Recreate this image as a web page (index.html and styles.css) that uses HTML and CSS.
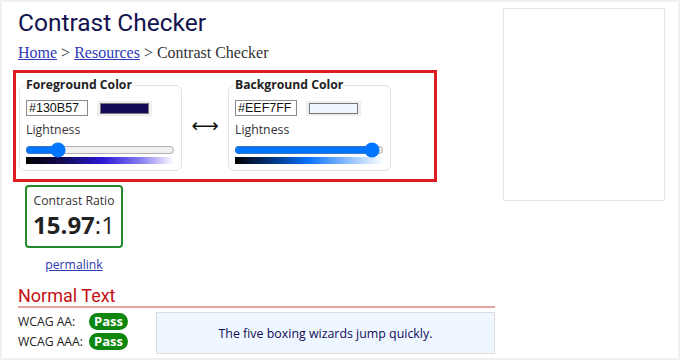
FILE: index.html
```html
<!DOCTYPE html>
<html>
<head>
<meta charset="utf-8">
<link rel="stylesheet" href="styles.css">
</head>
<body>
<div class="page">
  <main class="main">
    <h1 class="title">Contrast Checker</h1>
    <div class="crumbs"><a href="#">Home</a> &gt; <a href="#">Resources</a> &gt; Contrast Checker</div>
    <div class="highlight">
      <fieldset class="picker">
        <legend>Foreground Color</legend>
        <div class="pick-row">
          <input class="hex" type="text" value="#130B57">
          <span class="swatch"><span class="swatch-fill fg-fill"></span></span>
        </div>
        <div class="light-label">Lightness</div>
        <input class="range" type="range" min="0" max="100" value="19">
        <div class="grad fg-grad"></div>
      </fieldset>
      <div class="swap">&#x27F7;</div>
      <fieldset class="picker">
        <legend>Background Color</legend>
        <div class="pick-row">
          <input class="hex" type="text" value="#EEF7FF">
          <span class="swatch"><span class="swatch-fill bg-fill"></span></span>
        </div>
        <div class="light-label">Lightness</div>
        <input class="range" type="range" min="0" max="100" value="97">
        <div class="grad bg-grad"></div>
      </fieldset>
    </div>
    <div class="ratio-wrap">
      <div class="ratio">
        <div class="ratio-label">Contrast Ratio</div>
        <div class="ratio-value"><b>15.97</b>:1</div>
      </div>
      <a class="permalink" href="#">permalink</a>
    </div>
    <h2 class="section">Normal Text</h2>
    <div class="results">
      <div class="wcag">
        <div class="wcag-row"><span class="wcag-label">WCAG AA:</span><span class="pass">Pass</span></div>
        <div class="wcag-row"><span class="wcag-label">WCAG AAA:</span><span class="pass">Pass</span></div>
      </div>
      <div class="sample">The five boxing wizards jump quickly.</div>
    </div>
  </main>
  <aside class="ad"></aside>
</div>
</body>
</html>
```
FILE: styles.css
```css
html, body {
  margin: 0;
  padding: 0;
  background: #fff;
}
.page {
  width: 680px;
  height: 360px;
  box-sizing: border-box;
  border: 2px solid #f0f0f0;
  display: flex;
  gap: 8px;
  padding: 0 0 0 16px;
  overflow: hidden;
  font-family: "Open Sans", sans-serif;
  font-size: 12px;
  color: #222;
}
.main {
  width: 477px;
  flex: none;
}
.title {
  margin: 0;
  padding-top: 6px;
  font-family: Roboto, sans-serif;
  font-weight: 400;
  font-size: 24.5px;
  line-height: 30px;
  color: #12124e;
}
.crumbs {
  margin-top: 6px;
  font-family: "Liberation Serif", serif;
  font-size: 16px;
  line-height: 18px;
  color: #333;
}
.crumbs a {
  color: #2d3ab3;
}
.highlight {
  margin: 8px 0 0 -5px;
  width: 424px;
  height: 112px;
  box-sizing: border-box;
  border: 3px solid #dc1d22;
  display: flex;
  align-items: flex-start;
  padding: 4px 0 0 3px;
}
.picker {
  margin: 0;
  width: 163px;
  height: 94px;
  box-sizing: border-box;
  border: 1px solid #e2e2e2;
  border-radius: 6px;
  padding: 0 0 0 6px;
  min-width: 0;
}
.picker legend {
  font-weight: 700;
  font-size: 12.2px;
  line-height: 16px;
  padding: 0 1px;
  margin-left: -1px;
  color: #222;
}
.pick-row {
  display: flex;
  align-items: center;
  gap: 9px;
  margin-top: 7px;
}
.hex {
  width: 62px;
  height: 16px;
  box-sizing: border-box;
  border: 1px solid #8a8a8a;
  padding: 0 2px;
  font-family: "Liberation Sans", Arial, sans-serif;
  font-size: 12.5px;
  color: #111;
  margin: 0;
}
.swatch {
  width: 55px;
  height: 15px;
  box-sizing: border-box;
  background: #efefef;
  padding: 2px 3px;
  display: flex;
}
.swatch-fill {
  flex: 1;
  border: 1px solid #777;
}
.fg-fill { background: #130B57; }
.bg-fill { background: #EEF7FF; }
.light-label {
  margin-top: 5px;
  font-size: 12.3px;
  line-height: 18px;
  color: #333;
}
.range {
  display: block;
  width: 150px;
  margin: 4px 0 0 -1px;
  height: 14px;
}
.grad {
  width: 148px;
  height: 7px;
  margin-top: 0;
}
.fg-grad {
  background: linear-gradient(to right, #000 0%, #130b57 25%, #2a19d6 52%, #8a7ff0 78%, #fff 100%);
}
.bg-grad {
  background: linear-gradient(to right, #000 0%, #003480 25%, #0a74ff 50%, #85baff 75%, #fff 100%);
}
.swap {
  width: 46px;
  flex: none;
  text-align: center;
  font-family: "DejaVu Sans", sans-serif;
  font-size: 19px;
  line-height: 20px;
  margin-top: 38px;
  color: #111;
}
.ratio-wrap {
  width: 108px;
  display: flex;
  flex-direction: column;
  align-items: center;
  margin-top: 3px;
  margin-left: 2px;
}
.ratio {
  width: 98px;
  height: 63px;
  box-sizing: border-box;
  border: 2px solid #23892a;
  border-radius: 4px;
  text-align: center;
}
.ratio-label {
  margin-top: 5px;
  font-size: 12.2px;
  line-height: 18px;
  color: #333;
}
.ratio-value {
  font-size: 24px;
  line-height: 30px;
  color: #222;
}
.ratio-value b {
  font-weight: 700;
}
.permalink {
  margin-top: 8px;
  font-size: 12.2px;
  line-height: 18px;
  color: #2d3ab3;
}
.section {
  margin: 11px 0 0;
  font-family: Roboto, sans-serif;
  font-weight: 400;
  font-size: 18px;
  line-height: 21px;
  color: #c40f14;
  border-bottom: 2px solid #e8a3a3;
}
.results {
  display: flex;
  margin-top: 4px;
  gap: 28px;
}
.wcag {
  display: flex;
  flex-direction: column;
  gap: 3px;
  padding-top: 1px;
}
.wcag-row {
  display: flex;
  align-items: center;
  height: 17px;
}
.wcag-label {
  width: 71px;
  font-size: 12.2px;
  color: #222;
}
.pass {
  background: #0d870d;
  color: #fff;
  font-weight: 700;
  font-size: 13px;
  line-height: 17px;
  padding: 0 5px;
  border-radius: 9px;
}
.sample {
  flex: 1;
  height: 42px;
  box-sizing: border-box;
  background: #eef7ff;
  border: 1px solid #dcdcdc;
  color: #130B57;
  font-size: 12.4px;
  display: flex;
  align-items: center;
  justify-content: center;
}
.ad {
  width: 162px;
  height: 193px;
  margin-top: 6px;
  box-sizing: border-box;
  border: 1px solid #e6e6e6;
  flex: none;
}
```
